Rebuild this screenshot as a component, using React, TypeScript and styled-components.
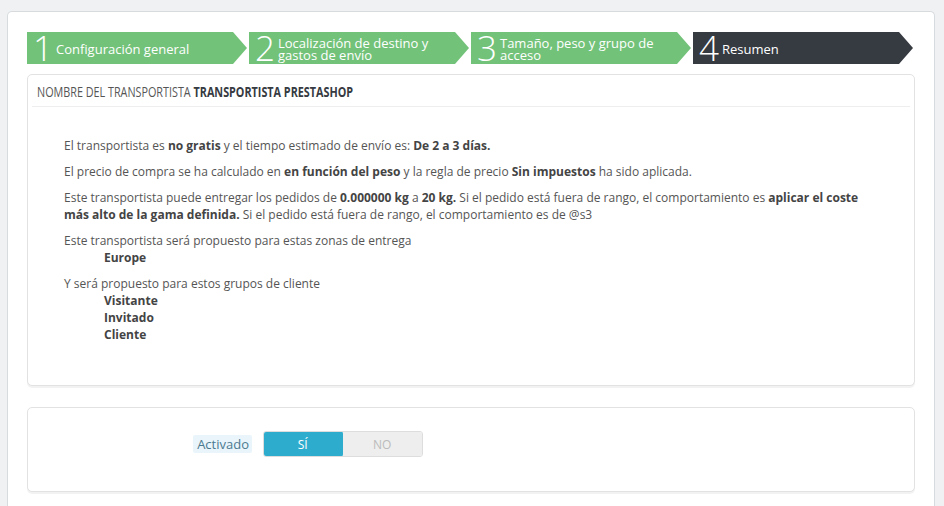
import React from "react";
import styled, { createGlobalStyle } from "styled-components";

const Global = createGlobalStyle`
  html, body { margin: 0; padding: 0; background: #eff1f2; }
  body { font-family: "Open Sans", "Liberation Sans", sans-serif; color: #555; font-size: 12px; }
  * { box-sizing: border-box; }
`;

const Page = styled.div`
  padding: 11px 9px 0 7px;
  height: 506px;
  overflow: hidden;
`;

const Card = styled.div`
  background: #fff;
  border: 1px solid #d7dbde;
  border-bottom: none;
  border-radius: 5px 5px 0 0;
  padding: 20px 19px 20px 19px;
  min-height: 520px;
`;

const Steps = styled.ol`
  display: flex;
  list-style: none;
  margin: 0 0 10px 0;
  padding: 0;
`;

const Step = styled.li<{ $active?: boolean }>`
  flex: 0 0 222px;
  height: 32px;
  display: flex;
  align-items: center;
  padding-left: 6px;
  color: #fff;
  background: ${(p) => (p.$active ? "#363a41" : "#72c279")};
  clip-path: polygon(0 0, calc(100% - 16px) 0, calc(100% - 2px) 50%, calc(100% - 16px) 100%, 0 100%);
`;

const StepNum = styled.span`
  font-size: 35px;
  font-weight: 300;
  line-height: 32px;
  margin-right: 4px;
  letter-spacing: -1px;
`;

const StepLabel = styled.span`
  font-size: 13px;
  line-height: 12px;
  padding-top: 1px;
`;

const Panel = styled.div`
  background: #fff;
  border: 1px solid #e2e2e2;
  border-radius: 5px;
  box-shadow: 0 2px 0 rgba(0, 0, 0, 0.05);
  padding: 0 4px;
`;

const Heading = styled.div`
  height: 32px;
  border-bottom: 1px solid #eee;
  padding: 0 0 0 5px;
  display: flex;
  align-items: center;
`;

const HeadingText = styled.span`
  display: inline-block;
  white-space: nowrap;
  font-family: "Open Sans", "Liberation Sans", sans-serif;
  font-size: 15px;
  text-transform: uppercase;
  color: #555;
  transform: scaleX(0.72);
  transform-origin: left center;
  b { color: #363a41; font-weight: 700; }
`;

const Body = styled.div`
  padding: 30px 32px 33px 32px;
  p { margin: 0 0 9px 0; line-height: 17px; }
  b { color: #444; font-weight: 700; }
`;

const Indent = styled.div`
  padding-left: 40px;
  font-weight: 700;
  color: #444;
  line-height: 17px;
`;

const Block = styled.div`
  margin: 0 0 9px 0;
  line-height: 17px;
`;

const SwitchPanel = styled(Panel)`
  margin-top: 21px;
  height: 85px;
  display: flex;
  align-items: flex-start;
  padding: 23px 0 0 0;
`;

const LabelCol = styled.div`
  width: 224px;
  display: flex;
  justify-content: flex-end;
  padding-top: 4px;
  margin-right: 11px;
`;

const LabelTag = styled.span`
  background: #e9f5fb;
  color: #4c7a90;
  font-size: 13px;
  line-height: 18px;
  padding: 0 3px 0 4px;
  border-radius: 2px;
`;

const Switch = styled.div`
  display: flex;
  width: 160px;
  height: 26px;
  border-radius: 3px;
  overflow: hidden;
  border: 1px solid #ddd;
`;

const Half = styled.span<{ $on?: boolean }>`
  flex: 1;
  display: flex;
  align-items: center;
  justify-content: center;
  font-size: 12px;
  background: ${(p) => (p.$on ? "#2eacce" : "#eee")};
  color: ${(p) => (p.$on ? "#fff" : "#bbb")};
  ${(p) => (p.$on ? "margin: -1px 0 -1px -1px; border-radius: 3px;" : "")}
`;

export default function App() {
  return (
    <>
      <Global />
      <Page>
        <Card>
          <Steps>
            <Step>
              <StepNum>1</StepNum>
              <StepLabel>Configuración general</StepLabel>
            </Step>
            <Step>
              <StepNum>2</StepNum>
              <StepLabel>
                Localización de destino y<br />gastos de envío
              </StepLabel>
            </Step>
            <Step>
              <StepNum>3</StepNum>
              <StepLabel>
                Tamaño, peso y grupo de<br />acceso
              </StepLabel>
            </Step>
            <Step $active>
              <StepNum>4</StepNum>
              <StepLabel>Resumen</StepLabel>
            </Step>
          </Steps>
          <Panel>
            <Heading>
              <HeadingText>
                Nombre del transportista <b>Transportista PrestaShop</b>
              </HeadingText>
            </Heading>
            <Body>
              <p>
                El transportista es <b>no gratis</b> y el tiempo estimado de envío es: <b>De 2 a 3 días.</b>
              </p>
              <p>
                El precio de compra se ha calculado en <b>en función del peso</b> y la regla de precio{" "}
                <b>Sin impuestos</b> ha sido aplicada.
              </p>
              <p>
                Este transportista puede entregar los pedidos de <b>0.000000 kg</b> a <b>20 kg.</b> Si el pedido
                está fuera de rango, el comportamiento es <b>aplicar el coste más alto de la gama definida.</b> Si
                el pedido está fuera de rango, el comportamiento es de @s3
              </p>
              <Block>
                Este transportista será propuesto para estas zonas de entrega
                <Indent>Europe</Indent>
              </Block>
              <Block>
                Y será propuesto para estos grupos de cliente
                <Indent>Visitante</Indent>
                <Indent>Invitado</Indent>
                <Indent>Cliente</Indent>
              </Block>
            </Body>
          </Panel>
          <SwitchPanel>
            <LabelCol>
              <LabelTag>Activado</LabelTag>
            </LabelCol>
            <Switch>
              <Half $on>SÍ</Half>
              <Half>NO</Half>
            </Switch>
          </SwitchPanel>
        </Card>
      </Page>
    </>
  );
}
